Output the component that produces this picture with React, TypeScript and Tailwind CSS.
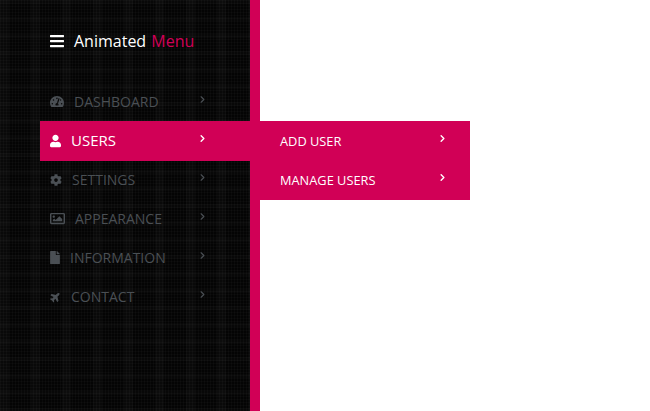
import { FC, ReactNode } from "react";
import { ChevronRight } from "lucide-react";
import { FaBars, FaCog, FaFile, FaPlane, FaRegImage, FaTachometerAlt, FaUser } from "react-icons/fa";

interface MenuRowProps {
    icon: ReactNode;
    label: string;
    gap: string;
}

const MenuRow: FC<MenuRowProps> = ({ icon, label, gap }) => (
    <li className={`relative flex h-[39px] items-center ${gap} pl-[50px] text-[#4a4f54]`}>
        {icon}
        <span className="text-sm">{label}</span>
        <ChevronRight className="absolute left-[197px] top-3 h-[11px] w-[11px]" strokeWidth={2.5} />
    </li>
);

const SubRow: FC<{ label: string }> = ({ label }) => (
    <li className="relative flex h-[39px] items-center pl-5 pt-0.5 text-[12.8px] text-white">
        {label}
        <ChevronRight className="absolute left-[177px] top-3 h-[11px] w-[11px]" strokeWidth={3} />
    </li>
);

export default function App() {
    return (
        <div className="h-[411px] w-[650px] overflow-hidden bg-white font-['Open_Sans',sans-serif]">
            <aside className="relative h-full w-[260px] border-r-10 border-[#d10056] bg-[#040404] bg-[linear-gradient(90deg,#ffffff06_1px,#0000_1px),linear-gradient(#ffffff05_1px,#0000_1px),linear-gradient(90deg,#ffffff05_9px,#0000_9px),linear-gradient(#ffffff04_4px,#0000_4px)] bg-size-[3px_3px,3px_3px,31px_31px,17px_17px]">
                <header className="flex items-center gap-2.5 pl-[50px] pt-[30px] text-white">
                    <FaBars className="h-4 w-[14px]" />
                    <h1 className="text-base leading-[22px]">
                        Animated <span className="ml-px text-[#d10056]">Menu</span>
                    </h1>
                </header>
                <ul className="mt-[30px]">
                    <MenuRow icon={<FaTachometerAlt className="h-[15px] w-[14px]" />} label="DASHBOARD" gap="gap-2.5" />
                    <li className="relative z-10 ml-10 -mb-px flex h-10 items-center gap-2.5 bg-[#d10056] pl-2.5 text-white">
                        <FaUser className="h-[14px] w-[11px]" />
                        <span className="-mt-0.5 text-[15px]">USERS</span>
                        <ChevronRight className="absolute left-[157px] top-3 h-[11px] w-[11px]" strokeWidth={3} />
                        <ul className="absolute left-[220px] top-0 h-[79px] w-[210px] bg-[#d10056]">
                            <SubRow label="ADD USER" />
                            <SubRow label="MANAGE USERS" />
                        </ul>
                    </li>
                    <MenuRow icon={<FaCog className="h-3 w-3" />} label="SETTINGS" gap="gap-2.5" />
                    <MenuRow icon={<FaRegImage className="h-[15px] w-[15px]" />} label="APPEARANCE" gap="gap-2.5" />
                    <MenuRow icon={<FaFile className="h-[13px] w-2.5" />} label="INFORMATION" gap="gap-2.5" />
                    <MenuRow icon={<FaPlane className="h-3 w-[11px] -rotate-45" />} label="CONTACT" gap="gap-2.5" />
                </ul>
            </aside>
        </div>
    );
}
